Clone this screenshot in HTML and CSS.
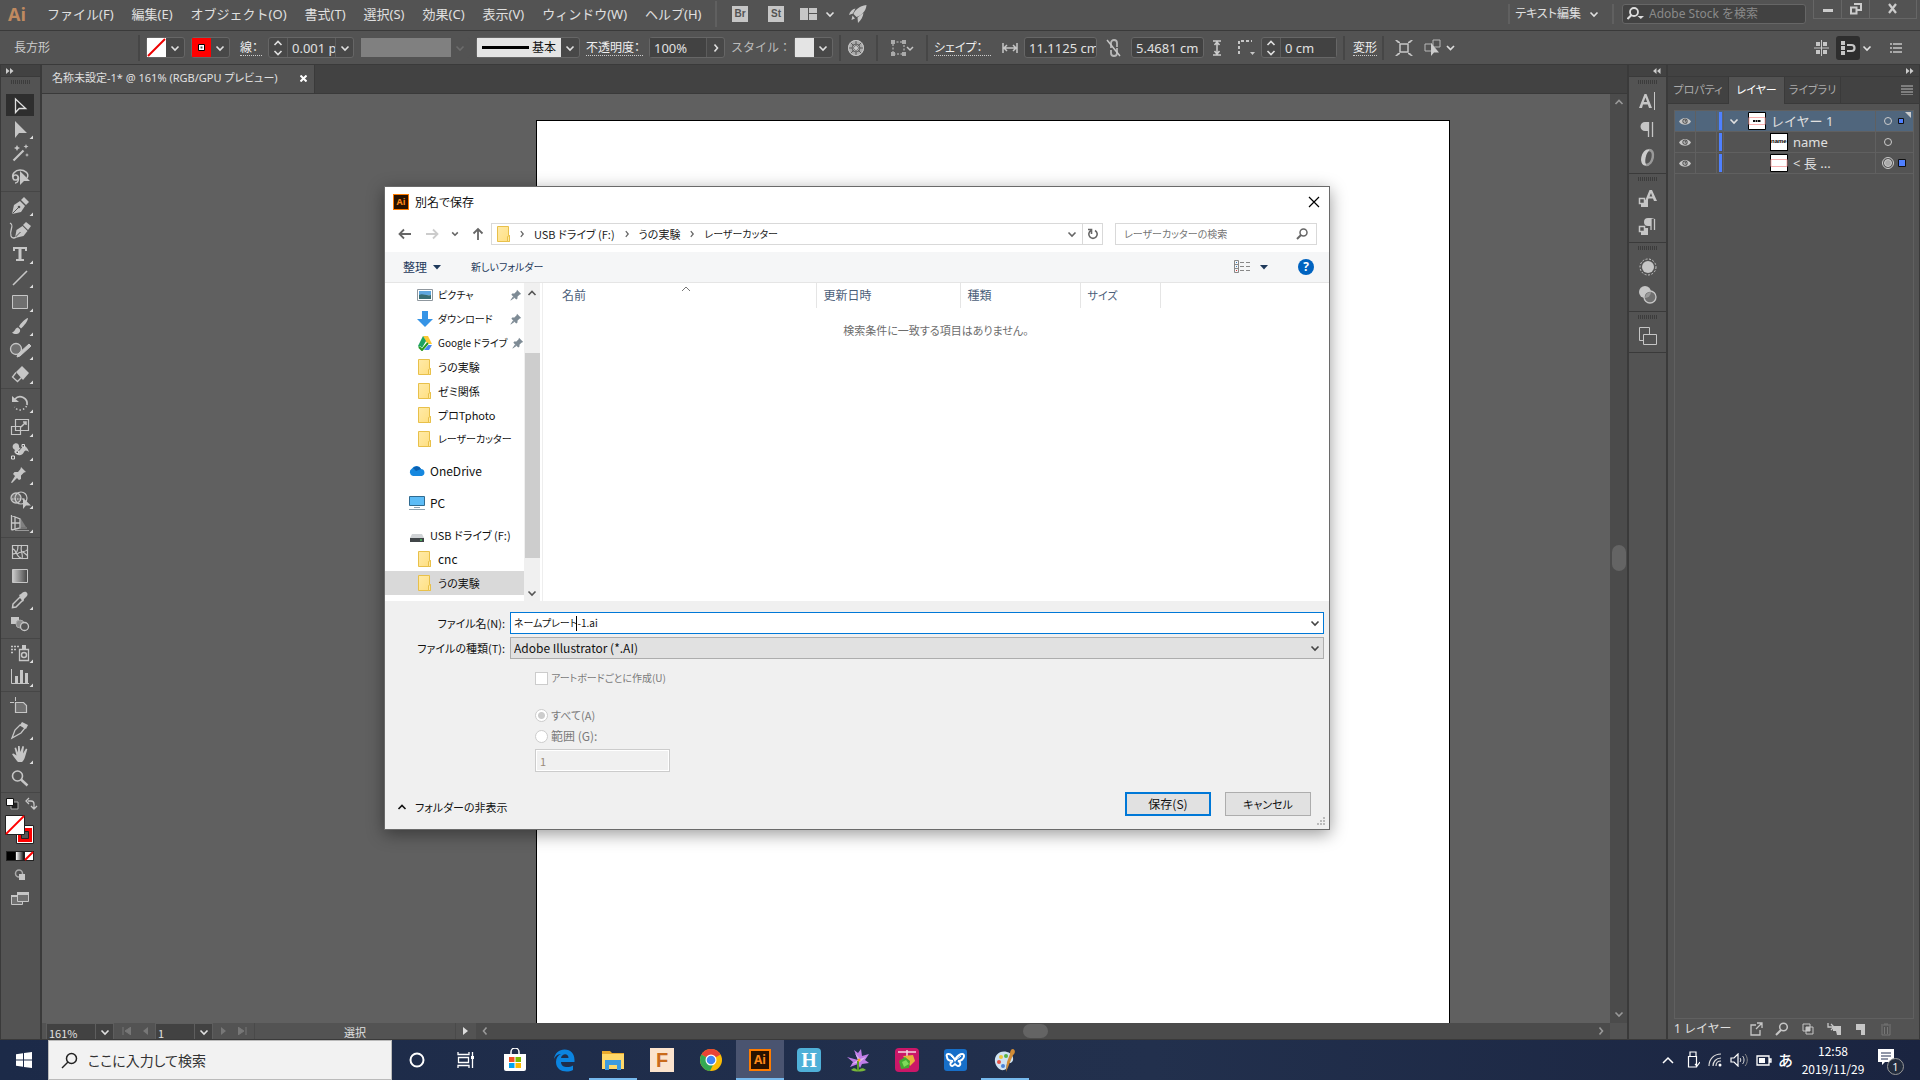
FILE: index.html
```html
<!DOCTYPE html>
<html lang="ja">
<head>
<meta charset="utf-8">
<title>名称未設定-1</title>
<link rel="stylesheet" href="styles.css">
</head>
<body>
<svg class="defs" aria-hidden="true">
  <defs>
    <linearGradient id="fade"><stop offset="0" stop-color="#ccc"/><stop offset="1" stop-color="#444"/></linearGradient>
    <linearGradient id="bw"><stop offset="0" stop-color="#fff"/><stop offset="1" stop-color="#111"/></linearGradient>
    <linearGradient id="gold" x2="1" y2="1"><stop offset="0" stop-color="#ffeaa8"/><stop offset="1" stop-color="#ffdf80"/></linearGradient>
    <symbol id="down" viewBox="0 0 10 10"><path d="M1.500 3.500 5 7l3.500-3.500" fill="none" stroke="currentColor" stroke-width="1.600"/></symbol>
    <symbol id="up" viewBox="0 0 10 10"><path d="M1.500 7 5 3.500 8.500 7" fill="none" stroke="currentColor" stroke-width="1.600"/></symbol>
    <symbol id="right" viewBox="0 0 10 10"><path d="M3.500 1.500 6.500 5l-3 3.500" fill="none" stroke="currentColor" stroke-width="1.600"/></symbol>
    <symbol id="left" viewBox="0 0 10 10"><path d="M6.500 1.500 3.500 5l3 3.500" fill="none" stroke="currentColor" stroke-width="1.600"/></symbol>
    <symbol id="spin" viewBox="0 0 10 18"><path d="M1.500 6 5 2.500 8.500 6M1.500 12 5 15.500 8.500 12" fill="none" stroke="currentColor" stroke-width="1.600"/></symbol>
    <symbol id="dbl-right" viewBox="0 0 8 6"><path d="M0 0 3.500 3 0 6zM4 0l3.500 3L4 6z" fill="currentColor"/></symbol>
    <symbol id="dbl-left" viewBox="0 0 8 6"><path d="M3.500 0 0 3l3.500 3zM7.500 0 4 3l3.500 3z" fill="currentColor"/></symbol>
    <symbol id="more" viewBox="0 0 36 24"><path d="M31 18.500V22h-3.500z" fill="currentColor"/></symbol>
    <symbol id="folder" viewBox="0 0 16 16"><path d="M1.500.5h11v9h1v6h-12z" fill="url(#gold)" stroke="#e8c04a"/><path d="M11.500 15.500v-5l2-1v6z" fill="#ffe9a0" stroke="#e8c04a"/></symbol>
    <symbol id="pin" viewBox="0 0 12 12"><path d="M7 .8 11.200 5l-1.400.4-2.200 2.200-.2 2.200-1.200.8L1.400 5.800l.8-1.200 2.200-.2 2.200-2.200zM3 7.600 4.400 9 .8 11.600l-.4-.4z" fill="#7e8b95"/></symbol>
    <symbol id="eye" viewBox="0 0 14 10"><path d="M0 5C3-.6 11-.6 14 5 11 10 3 10 0 5z" fill="#c6c6c6"/><circle cx="7" cy="4.600" r="2.500" fill="none" stroke="#505050" stroke-width="1.200"/><circle cx="7.400" cy="4.200" r="1" fill="#505050"/></symbol>
  </defs>
</svg>

<div class="app">
  <header class="menubar">
    <span class="brand">Ai</span>
    <nav class="menus">
      <button>ファイル(F)</button><button>編集(E)</button><button>オブジェクト(O)</button><button>書式(T)</button><button>選択(S)</button><button>効果(C)</button><button>表示(V)</button><button>ウィンドウ(W)</button><button>ヘルプ(H)</button>
    </nav>
    <div class="quick">
      <button class="chip">Br</button>
      <button class="chip">St</button>
      <button class="arrange" aria-label="ドキュメントの配置"><svg width="17" height="12"><path d="M0 0h8v12H0zM9 0h8v5H9zM9 6h8v6H9z" fill="#c6c6c6"/></svg><svg width="10" height="10"><use href="#down"/></svg></button>
      <button aria-label="GPU"><svg width="18" height="18" viewBox="0 0 18 18"><path d="M17.500 0C10 1 6 5 4.500 9l3 3C13 10 17 6 17.500 0zM6.500 3.500C3 4 1 6.500 0 10l4-1.500zM14.500 8C14 12 12 15 9 18l-.5-5.500zM3.500 10.500l2.500 3-3.500 1.500z" fill="#c6c6c6"/></svg></button>
    </div>
    <div class="menu-right">
      <button class="workspace">テキスト編集 <svg width="10" height="10"><use href="#down"/></svg></button>
      <label class="stock"><svg width="18" height="16" viewBox="0 0 18 16"><circle cx="7" cy="6" r="4" fill="none" stroke="#ddd" stroke-width="1.800"/><path d="m4.500 9-4 4" stroke="#ddd" stroke-width="2"/><path d="M10.500 10h6.500l-3.200 3z" fill="#ddd"/></svg><input type="text" placeholder="Adobe Stock を検索" aria-label="Adobe Stock を検索"></label>
      <div class="winbtns">
        <button aria-label="最小化"><svg width="12" height="12"><path d="M1 6h10v3H1z" fill="#ccc"/></svg></button>
        <button aria-label="元に戻す"><svg width="12" height="12"><path d="M4 1h7v6H7M1 4.500h5.500v6H1z" fill="none" stroke="#ccc" stroke-width="2"/></svg></button>
        <button class="wide" aria-label="閉じる"><svg width="12" height="12"><path d="m2 1 7 9M9 1 2 10" stroke="#ccc" stroke-width="2.200"/></svg></button>
      </div>
    </div>
  </header>

  <div class="control">
    <div class="kind">長方形</div>
    <div class="combo"><svg width="19" height="19"><path d="M0 0h19v19H0z" fill="#fff"/><path d="m1 18 17-17" stroke="#e00" stroke-width="2"/></svg><button aria-label="塗り"><svg width="10" height="10"><use href="#down"/></svg></button></div>
    <div class="combo"><svg width="19" height="19"><path d="M0 0h19v19H0z" fill="red"/><path d="M6.500 6.500h6v6h-6z" fill="#fff" stroke="#000"/><path d="M8 8h3v3H8z" fill="#fff" stroke="#fff"/><path d="M8.500 8.500h2v2h-2z" fill="#555"/></svg><button aria-label="線の色"><svg width="10" height="10"><use href="#down"/></svg></button></div>
    <label class="link strokew" for="sw">線：</label>
    <div class="combo"><button aria-label="増減"><svg width="10" height="18"><use href="#spin"/></svg></button><input id="sw" class="w48" value="0.001 pt"><button aria-label="線幅"><svg width="10" height="10"><use href="#down"/></svg></button></div>
    <div class="combo off"><span class="profile"></span><button disabled aria-label="プロファイル"><svg width="10" height="10"><use href="#down"/></svg></button></div>
    <div class="combo"><span class="brush"><i></i>基本</span><button aria-label="ブラシ"><svg width="10" height="10"><use href="#down"/></svg></button></div>
    <label class="link wide-label" for="op">不透明度：</label>
    <div class="combo"><input id="op" class="w56" value="100%"><button aria-label="不透明度"><svg width="10" height="10"><use href="#right"/></svg></button></div>
    <span class="muted wide-label">スタイル：</span>
    <div class="combo"><span class="style"></span><button aria-label="スタイル"><svg width="10" height="10"><use href="#down"/></svg></button></div>
    <button class="cell" aria-label="オブジェクトを再配色"><svg width="18" height="18" viewBox="0 0 18 18"><circle cx="9" cy="9" r="8" fill="#aaa"/><path d="M9 1v16M1 9h16M3.500 3.500l11 11M14.500 3.500l-11 11" stroke="#5a5a5a"/><circle cx="9" cy="9" r="4" fill="none" stroke="#666"/><circle cx="9" cy="9" r="7.500" fill="none" stroke="#c8c8c8"/><circle cx="9" cy="9" r="2" fill="#c8c8c8"/></svg></button>
    <button class="cell" aria-label="整列"><svg width="24" height="18" viewBox="0 0 24 18"><path d="M3 3h11v12H3z" fill="none" stroke="#c6c6c6" stroke-dasharray="2 1.500"/><path d="M1 1h4v4H1zM12 1h4v4h-4zM1 13h4v4H1zM12 13h4v4h-4z" fill="#aaa"/><path d="m17 8 3 3 3-3" fill="none" stroke="#c6c6c6" stroke-width="1.500"/></svg></button>
    <label class="link wide-label shape" for="w">シェイプ：</label>
    <svg width="16" height="12" viewBox="0 0 16 12"><path d="M1 1v10M15 1v10M2 6h12M5 3 2 6l3 3M11 3l3 3-3 3" fill="none" stroke="#c6c6c6" stroke-width="1.500"/></svg>
    <input id="w" class="box" value="11.1125 cm">
    <svg width="16" height="18" viewBox="0 0 16 18"><path d="M5 9V4a3 3 0 0 1 6 0v4M11 9v5a3 3 0 0 1-6 0v-3" fill="none" stroke="#b6b6b6" stroke-width="1.800"/><path d="m1 1 13 16" stroke="#c6c6c6" stroke-width="1.500"/></svg>
    <input class="box" aria-label="高さ" value="5.4681 cm">
    <svg width="8" height="16" viewBox="0 0 8 16"><path d="M0 1h8M0 15h8M4 2v12M1.500 5 4 2l2.500 3M1.500 11 4 14l2.500-3" fill="none" stroke="#ccc" stroke-width="1.500"/></svg>
    <svg class="corners" width="17" height="16" viewBox="0 0 17 16"><path d="M1 14V1h13" fill="none" stroke="#c6c6c6" stroke-width="2" stroke-dasharray="3 2"/><path d="M12 12h5l-2.500 3z" fill="#c6c6c6"/></svg>
    <div class="combo"><button aria-label="角丸の増減"><svg width="10" height="18"><use href="#spin"/></svg></button><input class="w56" aria-label="角丸の半径" value="0 cm"></div>
    <div class="transform"><a class="link" href="#">変形</a></div>
    <button class="plain" aria-label="選択オブジェクト編集モード"><svg width="18" height="16" viewBox="0 0 18 16"><path d="M5 4h8v8H5z" fill="none" stroke="#c6c6c6" stroke-width="1.500"/><path d="M0 0h2l3 2v1H3zM18 0h-2l-3 2v1h2zM0 16h2l3-2v-1H3zM18 16h-2l-3-2v-1h2z" fill="#c6c6c6"/></svg></button>
    <button class="plain" aria-label="同じ属性を選択"><svg width="32" height="18" viewBox="0 0 32 18"><path d="M9 1h7v7H9zM1 5h7v7H1z" fill="none" stroke="#b8b8b8"/><path d="M7 4v13l3-3.500h5z" fill="#ccc"/><path d="m23 7 3.500 3.500L30 7" fill="none" stroke="#ddd" stroke-width="1.700"/></svg></button>
    <div class="control-end">
      <svg width="15" height="16"><path d="M7.500 0v16M0 8h15" stroke="#c6c6c6"/><path d="M2 2h4v4H2zM9 2h4v4H9zM2 10h4v4H2zM9 10h4v4H9z" fill="#c6c6c6"/></svg>
      <button class="snap" aria-label="スナップ"><svg width="15" height="16"><path d="M0 1h4v4H0zM0 6h4v4H0zM0 11h4v4H0z" fill="#c6c6c6"/><path d="M6 5h4.500a3 3 0 0 1 0 6H6" fill="none" stroke="#c6c6c6" stroke-width="2.200"/></svg></button>
      <svg width="10" height="10"><use href="#down"/></svg>
      <svg class="list" width="12" height="10"><path d="M0 1h2M3 1h9M0 5h2M3 5h9M0 9h2M3 9h9" stroke="#c6c6c6" stroke-width="1.500"/></svg>
    </div>
  </div>

  <main class="work">
    <aside class="tools">
      <div class="dock-head"><svg width="8" height="6"><use href="#dbl-right"/></svg></div>
      <div class="grip"></div>
      <div class="toolset">
        <button class="on" aria-label="選択"><svg><path d="M13.500 6v13.500l3.700-4h6.500z" fill="none" stroke="#e0e0e0" stroke-width="1.300"/></svg></button>
        <button aria-label="ダイレクト選択"><svg><path d="M13 4v17l4-5h8z" fill="#c6c6c6"/><use href="#more"/></svg></button>
        <button aria-label="自動選択"><svg><path d="m11.500 19.500 10-10" stroke="#c6c6c6" stroke-width="2.200"/><path d="m15 4 1 2 2 1-2 1-1 2-1-2-2-1 2-1zM24 3l.7 1.700 1.800.8-1.800.8L24 8l-.7-1.700-1.800-.8 1.800-.8zM25 12l.6 1.400 1.400.6-1.400.6L25 16l-.6-1.400L23 14l1.400-.6z" fill="#c6c6c6"/></svg></button>
        <button aria-label="なげなわ"><svg><path d="M12 15C8 9 14 5 18 5s10 3 7 8M14 10a2.500 2.500 0 1 1-1 5 2.500 2.500 0 0 1 1-5c4 0 3 8-1 8" fill="none" stroke="#c6c6c6" stroke-width="1.500"/><path d="M18 6v14l4-4h6z" fill="#c6c6c6"/></svg></button>
      </div>
      <div class="toolset">
        <button aria-label="ペン"><svg><path d="M10 20l2-9 6-4 5 5-4 6z" fill="#c6c6c6"/><path d="m19 6 3-3 5 5-3 3z" fill="#c6c6c6"/><path d="m10.500 19.500 6-6" stroke="#535353"/><circle cx="17" cy="13" r="1.300" fill="#535353"/><use href="#more"/></svg></button>
        <button aria-label="曲線"><svg><path d="M13 20l1.500-8 6-4 5 5-4 5z" fill="#c6c6c6"/><path d="m21 7 3-3 5 4-3 4z" fill="#c6c6c6"/><path d="m13.500 19 5-5" stroke="#535353"/><path d="M8 5c5 3-1 6 1 13 1 3 4 2 5 1" fill="none" stroke="#c6c6c6" stroke-width="1.300"/></svg></button>
        <button aria-label="文字"><svg><path d="M11 5h14v4h-2V7h-3.500v10H22v2h-8v-2h2.500V7H13v2h-2z" fill="#c6c6c6"/><use href="#more"/></svg></button>
        <button aria-label="直線"><svg><path d="m11 19 14-14" stroke="#c6c6c6" stroke-width="1.600"/><use href="#more"/></svg></button>
        <button aria-label="長方形"><svg><path d="M10.500 5.500h15v13h-15z" fill="#707070" stroke="#c6c6c6"/><use href="#more"/></svg></button>
        <button aria-label="ブラシ"><svg><path d="M26 4c-2 0-8 6-9 8.500l2 2C22 12 26 7 26 4zM16 13.500c-3 0-2.500 4-6 5 3 3 9 1.500 8-3z" fill="#c6c6c6"/><use href="#more"/></svg></button>
        <button aria-label="Shaper"><svg><circle cx="14" cy="11" r="5.500" fill="#707070" stroke="#c6c6c6" stroke-width="1.300"/><path d="M15 19l1-3L27 6l2 2-11 10z" fill="#c6c6c6" stroke="#c6c6c6"/><use href="#more"/></svg></button>
        <button aria-label="消しゴム"><svg><path d="m14 10 6-6 7 7-6 7z" fill="#c6c6c6"/><path d="m14 10.500-3.500 4.500 5 4.500 4-4" fill="none" stroke="#c6c6c6" stroke-width="1.300"/><use href="#more"/></svg></button>
      </div>
      <div class="toolset">
        <button aria-label="回転"><svg><path d="M13 8a7 7 0 0 1 12 6" fill="none" stroke="#c6c6c6" stroke-width="1.800"/><path d="M10 5v6h7z" fill="#c6c6c6"/><path d="M24.500 15a7 7 0 0 1-12 1" fill="none" stroke="#c6c6c6" stroke-width="1.500" stroke-dasharray="1.500 2"/><use href="#more"/></svg></button>
        <button aria-label="拡大・縮小"><svg><path d="M13.500 4.500h13v11h-13zM9.500 11.500h9v8h-9z" fill="none" stroke="#c6c6c6" stroke-width="1.200"/><path d="m19 12 5-5M21 7h3v3" fill="none" stroke="#c6c6c6" stroke-width="1.500"/><use href="#more"/></svg></button>
        <button aria-label="線幅"><svg><path d="M11 6c2-3 6-2 6 1 0 2 1 3 3 1s5-1 7 5c-2-2-4-2-5 0-2 4-5 4-8 2-2-1-2-3-1-4-2-1-3-3-2-5z" fill="#c6c6c6"/><path d="m11 18 10-11" stroke="#535353"/><path d="M9.500 17h3v3h-3zM20 5.500h2.500V8H20zM14 12h2.500v2.500H14z" fill="#535353" stroke="#ddd"/><use href="#more"/></svg></button>
        <button aria-label="パペットワープ"><svg><path d="m19 4 5 5-2 .5-3 3 0 3.500-2 1-6-6 1.500-2 3.500 0 2.500-3zM13 13l2 2-5 5-1-.5z" fill="#c6c6c6"/><use href="#more"/></svg></button>
        <button aria-label="シェイプ形成"><svg><circle cx="14" cy="11" r="5" fill="#707070" stroke="#c6c6c6" stroke-width="1.300"/><circle cx="19" cy="11" r="6" fill="none" stroke="#c6c6c6" stroke-width="1.200"/><path d="M10 12h13" stroke="#ddd" stroke-dasharray="1.500 1"/><path d="M21 11v11l3-3.500h5z" fill="#c6c6c6"/><use href="#more"/></svg></button>
        <button aria-label="遠近グリッド"><svg><path d="M9.500 4v15M9.500 4.500 18 8v9l-8.500 2M9.500 12H18M13 6v12" fill="none" stroke="#c6c6c6" stroke-width="1.300"/><path d="M19 8l5 8h-5z" fill="#808080"/><path d="M13 19.500h14M17 17h8" stroke="#999"/><use href="#more"/></svg></button>
      </div>
      <div class="toolset">
        <button aria-label="メッシュ"><svg><path d="M10.500 5.500h15v13h-15zM10 14c5 0 6-3 6-9M10 9c4-1 4 8 9 9M20 5c-3 5 2 9 0 14M15 14c5-4 7 0 11-5M21 12l5 4" fill="none" stroke="#c6c6c6" stroke-width="1.200"/></svg></button>
        <button aria-label="グラデーション"><svg><path d="M10.500 5.500h15v13h-15z" fill="url(#fade)" stroke="#c6c6c6"/></svg></button>
        <button aria-label="スポイト"><svg><path d="m18 9 3 3-7 7-3.500.5.500-3.500z" fill="none" stroke="#c6c6c6" stroke-width="1.500"/><path d="M17 7l2-1c4-5 8-1 6 2l-3 3-1 3z" fill="#c6c6c6"/><use href="#more"/></svg></button>
        <button aria-label="ブレンド"><svg><path d="M9 5h8v7H9z" fill="#c6c6c6"/><circle cx="18" cy="12" r="4" fill="#8c8c8c" stroke="#aaa"/><circle cx="22.500" cy="14.500" r="4" fill="#535353" stroke="#c6c6c6" stroke-width="1.300"/></svg></button>
      </div>
      <div class="toolset">
        <button aria-label="シンボルスプレー"><svg><path d="M17.500 8.500h9v11h-9z" fill="none" stroke="#c6c6c6" stroke-width="1.300"/><path d="M20 4h4v4h-4z" fill="#c6c6c6"/><circle cx="22" cy="14" r="2.500" fill="none" stroke="#c6c6c6" stroke-width="1.500"/><path d="M9 5.500h8M9 8.500h6M9 11.500h3" stroke="#c6c6c6" stroke-width="1.500" stroke-dasharray="2 1"/><use href="#more"/></svg></button>
        <button aria-label="グラフ"><svg><path d="M9.500 4v14.500H27" fill="none" stroke="#c6c6c6"/><path d="M13 11h3v7h-3zM18 5h3v13h-3zM23 8h3v10h-3z" fill="#c6c6c6"/><use href="#more"/></svg></button>
      </div>
      <div class="toolset">
        <button aria-label="アートボード"><svg><path d="M13.500 8.500h8l3 3v7h-11z" fill="#707070" stroke="#c6c6c6" stroke-width="1.200"/><path d="M8 8.500h4M13.500 3v4" stroke="#c6c6c6"/></svg></button>
        <button aria-label="スライス"><svg><path d="m10 20 3-8 5-5 5 3-4 5z" fill="none" stroke="#c6c6c6" stroke-width="1.300"/><path d="m18 7 2-3 6 3-2 4z" fill="#c6c6c6"/><use href="#more"/></svg></button>
        <button aria-label="手のひら"><svg><path d="M15 19c-2-3-4-5-5-7l1.500-.5 3 2L12.500 6 14 5.500l2 5V4h1.700l.6 6L20.500 4l1.500.5-1 7 3-5 1.300.8L23 15c-1 3-2 4-3 5h-4z" fill="#c6c6c6"/><use href="#more"/></svg></button>
        <button aria-label="ズーム"><svg><circle cx="15.500" cy="10" r="5" fill="none" stroke="#c6c6c6" stroke-width="1.600"/><path d="m19 13.500 6.500 6" stroke="#c6c6c6" stroke-width="2.400"/></svg></button>
      </div>
      <div class="swatches">
        <svg width="36" height="68" viewBox="0 0 36 68"><path d="M9 7h7v7H9z" fill="#222" stroke="#aaa"/><path d="M4.500 3.500h7v7h-7z" fill="#fff" stroke="#111"/><path d="M26 6h3a3 3 0 0 1 3 3v4M27 3l-3 3 3 3M29 11l3 3 3-3" fill="none" stroke="#c6c6c6" stroke-width="1.300"/>
          <path d="M14.500 30.500h17v18h-17z" fill="#fff" stroke="#222"/><path d="M18 35h10v10H18z" fill="#555" stroke="red" stroke-width="4"/><path d="M19.500 36.500h7v7h-7z" fill="#555" stroke="#222"/>
          <path d="M3.500 20.500h19v19h-19z" fill="#fff" stroke="#222"/><path d="m4 39 18-18" stroke="red" stroke-width="1.800"/>
          <path d="M4 56h28v10H4z" fill="#222"/><path d="M5 57h8v8H5z" fill="#000"/><path d="M14 57h8v8h-8z" fill="url(#bw)"/><path d="M23 57h8v8h-8z" fill="#fff"/><path d="m23 65 8-8" stroke="red" stroke-width="2"/></svg>
      </div>
      <button class="mode" aria-label="描画方法"><svg><circle cx="17" cy="10.500" r="3.500" fill="none" stroke="#aaa" stroke-width="1.500"/><path d="M17 11h6v6h-6z" fill="#c6c6c6"/></svg></button>
      <button class="mode" aria-label="スクリーンモード"><svg><path d="M9.500 8.500h11v9h-11z" fill="#707070" stroke="#c6c6c6"/><path d="M15.500 5.500h11v9h-11z" fill="#707070" stroke="#c6c6c6"/><path d="M15 5h12v3H15zM9 8h6v2H9z" fill="#c6c6c6"/></svg></button>
    </aside>

    <section class="document">
      <div class="tabs"><div class="tab">名称未設定-1* @ 161% (RGB/GPU プレビュー) <button aria-label="閉じる"><svg width="7" height="7"><path d="m.5.5 6 6M6.500.5l-6 6" stroke="#fff" stroke-width="2"/></svg></button></div></div>
      <div class="stage">
        <div class="canvas"><div class="artboard"></div></div>
        <div class="vscroll"><svg width="10" height="10"><use href="#up"/></svg><i></i><svg width="10" height="10"><use href="#down"/></svg></div>
      </div>
      <div class="status">
        <div class="zoom"><input aria-label="ズーム" value="161%"><button aria-label="ズーム選択"><svg width="10" height="10"><use href="#down"/></svg></button></div>
        <div class="nav"><svg width="9" height="8"><path d="M1 0v8M9 0 3 4l6 4z" fill="#777" stroke="#777"/></svg><svg width="6" height="8"><path d="M6 0 1 4l5 4z" fill="#777"/></svg></div>
        <div class="zoom page"><input aria-label="アートボード" value="1"><button aria-label="アートボード選択"><svg width="10" height="10"><use href="#down"/></svg></button></div>
        <div class="nav"><svg width="6" height="8"><path d="m0 0 5 4-5 4z" fill="#777"/></svg><svg width="9" height="8"><path d="M8 0v8M0 0l6 4-6 4z" fill="#777" stroke="#777"/></svg></div>
        <div class="current">選択</div>
        <svg class="play" width="6" height="8"><path d="m0 0 5 4-5 4z" fill="#ddd"/></svg>
        <div class="hscroll"><svg width="10" height="10"><use href="#left"/></svg><i></i><svg width="10" height="10"><use href="#right"/></svg></div>
        <div class="corner"></div>
      </div>
    </section>

    <aside class="dock">
      <div class="dock-head"><svg width="8" height="6"><use href="#dbl-left"/></svg></div>
      <div class="dock-group"><div class="grip"></div>
        <button aria-label="文字"><svg width="22" height="22"><path d="M2 18 7.500 4h2L15 18h-3l-1.200-3.500H6L5 18zM6.800 12h3.300L8.500 7.500z" fill="#c6c6c6"/><path d="M17.500 2v18" stroke="#c6c6c6"/></svg></button>
        <button aria-label="段落"><svg width="22" height="22"><path d="M11.500 4v15M15.500 4v15" stroke="#c6c6c6" stroke-width="1.300"/><path d="M16 4H8a4 4 0 0 0 0 9h4V4z" fill="#c6c6c6"/></svg></button>
        <button aria-label="OpenType"><svg width="22" height="22"><path d="M12 4C5 3 1.500 19 9 19c-3-2-1-13 3-15z" fill="#ccc" stroke="#ccc" stroke-width="1.500"/><path d="M12 4c7 0 4 15-3 15" fill="none" stroke="#999" stroke-width="2.500"/></svg></button>
      </div>
      <div class="dock-group"><div class="grip"></div>
        <button aria-label="文字スタイル"><svg width="22" height="22"><path d="m8 14 4.500-11h2.500l5 11h-3l-1-2.500h-4.500L10.500 14zM12.500 9.500h2.800L14 6z" fill="#c6c6c6"/><path d="M4 13h7v7H4z" fill="#c6c6c6"/><path d="M2.500 11.500h5v5h-5z" fill="#535353" stroke="#c6c6c6" stroke-width="1.500"/></svg></button>
        <button aria-label="段落スタイル"><svg width="22" height="22"><path d="M14 4v11M17.500 4v11" stroke="#c6c6c6" stroke-width="1.300"/><path d="M18 3h-7a4 4 0 0 0 0 8h3V4z" fill="#c6c6c6"/><path d="M4 13h7v7H4z" fill="#c6c6c6"/><path d="M2.500 11.500h5v5h-5z" fill="#535353" stroke="#c6c6c6" stroke-width="1.500"/></svg></button>
      </div>
      <div class="dock-group"><div class="grip"></div>
        <button aria-label="アピアランス"><svg width="22" height="22"><circle cx="11" cy="11" r="6" fill="#c6c6c6"/><circle cx="11" cy="11" r="8" fill="none" stroke="#c6c6c6" stroke-dasharray="2 1.500"/></svg></button>
        <button aria-label="グラフィックスタイル"><svg width="22" height="22"><circle cx="8" cy="8" r="6" fill="#c6c6c6"/><circle cx="13" cy="13" r="6" fill="#707070" stroke="#c6c6c6" stroke-width="1.300"/><path d="M8 14a6 6 0 0 1 6-6 6 6 0 0 1-6 6z" fill="#999"/></svg></button>
      </div>
      <div class="dock-group"><div class="grip"></div>
        <button aria-label="アセット"><svg width="22" height="22"><path d="M2.500 2.500h10v13h-10z" fill="none" stroke="#c6c6c6"/><path d="M6.500 9.500h13v10h-13z" fill="#535353" stroke="#c6c6c6"/></svg></button>
      </div>
    </aside>

    <aside class="panel">
      <div class="dock-head end"><svg width="8" height="6"><use href="#dbl-right"/></svg></div>
      <div class="panel-tabs"><button>プロパティ</button><button class="on">レイヤー</button><button>ライブラリ</button><svg width="12" height="10"><path d="M0 1h12M0 4h12M0 7h12M0 10h12" stroke="#bbb"/></svg></div>
      <ul class="layers">
        <li class="sel"><span><svg width="12" height="9"><use href="#eye"/></svg></span><span></span><b></b><div><svg width="10" height="10"><use href="#down"/></svg><svg width="18" height="18"><path d="M.5.5h17v17H.5z" fill="#fff" stroke="#000"/><path d="M1 5.500h16v7H1z" fill="none" stroke="#f8b0b0"/><path d="M5 9h8" stroke="#111" stroke-width="2" stroke-dasharray="2 .5"/></svg>レイヤー 1</div><span class="target"><svg width="34" height="18"><circle cx="11" cy="9" r="3.500" fill="none" stroke="#ccc"/><path d="M21.500 6.500h5v5h-5z" fill="#4f80ff" stroke="#111"/><path d="M28 0h6v6z" fill="#ccc"/></svg></span></li>
        <li><span><svg width="12" height="9"><use href="#eye"/></svg></span><span></span><b></b><div class="sub"><i class="thumb">name</i>name</div><span class="target"><svg width="34" height="18"><circle cx="11" cy="9" r="3.500" fill="none" stroke="#ccc"/></svg></span></li>
        <li><span><svg width="12" height="9"><use href="#eye"/></svg></span><span></span><b></b><div class="sub"><svg width="18" height="18"><path d="M.5.5h17v17H.5z" fill="#fff" stroke="#000"/><path d="M1 5.500h16v7H1z" fill="none" stroke="#f8b0b0"/></svg>&lt; 長 ...</div><span class="target"><svg width="34" height="18"><circle cx="11" cy="9" r="3.500" fill="#aaa" stroke="#ccc"/><circle cx="11" cy="9" r="5.500" fill="none" stroke="#ccc"/><path d="M21.500 5.500h7v7h-7z" fill="#4f80ff" stroke="#111"/></svg></span></li>
      </ul>
      <div class="panel-foot"><span>1 レイヤー</span>
        <svg width="14" height="14"><path d="M7 3H2v10h9V8M8 1h5v5M13 1 7 7" fill="none" stroke="#c6c6c6" stroke-width="1.300"/></svg>
        <svg width="14" height="14"><circle cx="8.500" cy="5" r="3.800" fill="none" stroke="#c6c6c6" stroke-width="1.500"/><path d="m6 8-5 5" stroke="#c6c6c6" stroke-width="2"/></svg>
        <svg width="14" height="14"><path d="M2 2h7v7H2zM5 5h7v7H5z" fill="none" stroke="#c6c6c6"/><path d="M5 5h4v4H5z" fill="#c6c6c6"/></svg>
        <svg width="14" height="14"><path d="M6 4h8v9h-4l-1-4H6z" fill="#c6c6c6"/><path d="M1 1v4h5M4 2l3 3-3 3" fill="none" stroke="#c6c6c6" stroke-width="1.300"/></svg>
        <svg width="14" height="14"><path d="M3 2h9v11H8V8H3z" fill="#c6c6c6"/></svg>
        <svg width="14" height="14"><path d="M2 3h10M5 2h4M3 4v9h8V4M5.500 5v7M8.500 5v7" fill="none" stroke="#777"/></svg>
      </div>
    </aside>
  </main>

  <footer class="taskbar">
    <button class="start" aria-label="スタート"><svg width="16" height="16"><path d="M0 2.300 7 1.300v6.200H0zM8 1.100 16 0v7.500H8zM0 8.500h7v6.200l-7-1zM8 8.500h8V16l-8-1.100z" fill="#fff"/></svg></button>
    <label class="tsearch"><svg width="17" height="17"><circle cx="10.500" cy="6.500" r="5" fill="none" stroke="#222" stroke-width="1.500"/><path d="m7 10-6 6" stroke="#222" stroke-width="1.500"/></svg><input type="text" placeholder="ここに入力して検索" aria-label="ここに入力して検索"></label>
    <nav class="apps">
      <button aria-label="Cortana"><svg><circle cx="12" cy="12" r="6.500" fill="none" stroke="#fff" stroke-width="2"/></svg></button>
      <button aria-label="タスクビュー"><svg><path d="M4 4v2.500h11V4M4 20v-2.500h11V20M4.500 9.500h10v5h-10zM18.500 4v16" fill="none" stroke="#fff" stroke-width="1.300"/><path d="M17 8h3v3h-3z" fill="#fff"/></svg></button>
      <button aria-label="ストア"><svg><path d="M8 6V4a4 4 0 0 1 8 0v2" fill="none" stroke="#fff" stroke-width="1.500"/><path d="M1 6h22v15a2 2 0 0 1-2 2H3a2 2 0 0 1-2-2z" fill="#fff"/><path d="M6 9h5.500v5H6z" fill="#f25022"/><path d="M12.500 9H18v5h-5.500z" fill="#7fba00"/><path d="M6 15h5.500v5H6z" fill="#00a4ef"/><path d="M12.500 15H18v5h-5.500z" fill="#ffb900"/></svg></button>
      <button aria-label="Edge"><svg><path d="M2 11C3 5 7 1.500 12.500 1.500 19 1.500 22.500 6 22.500 12v2H9c0 6 8 6 12 3.500V22c-7 3.500-17 1-17-8 0-4 2-6.500 5-8-4 0-6 3-7 5zm7-1h7.500c0-5-6.500-5-7.500 0z" fill="#0b84e0"/></svg></button>
      <button class="run" aria-label="エクスプローラー"><svg><path d="M1 3h8l2 2h12v4H1z" fill="#e9a92c"/><path d="M1 6h22v15H1z" fill="#ffd869"/><path d="M4 12h16v10h-4v-5H8v5H4z" fill="#3d9bdf"/></svg></button>
      <button aria-label="Fusion 360"><span class="logo fusion">F</span></button>
      <button aria-label="Chrome"><svg><circle cx="12" cy="12" r="11" fill="#fbbc05"/><path d="M12 12 2.500 6.500a11 11 0 0 1 19 0z" fill="#ea4335"/><path d="M2.500 6.500A11 11 0 0 0 11 23l4-8-3-3z" fill="#34a853"/><circle cx="12" cy="12" r="5.500" fill="#fff"/><circle cx="12" cy="12" r="4.300" fill="#4285f4"/></svg></button>
      <button class="active" aria-label="Illustrator"><span class="logo ai">Ai</span></button>
      <button aria-label="H"><span class="logo h">H</span></button>
      <button aria-label="花"><svg><path d="M12 12 8 2l4 3 3-4 1 7 7-2-4 6 4 3-7 1-2 4-2-4-8 3 3-5-6-5z" fill="#c07de8"/><path d="m12 12-3-7 5 6 6-2-6 5-8 2z" fill="#e2b5f5"/><path d="M11 13h2v10h-2z" fill="#5a9a28"/><path d="M5 22c3-3 5-2 7 1 2-3 5-4 8-1-4 2-11 2-15 0z" fill="#78b83a"/><circle cx="13" cy="12" r="1.500" fill="#f1a22a"/></svg></button>
      <button aria-label="レーザー"><svg><rect width="24" height="24" rx="4" fill="#cb1768"/><path d="M3 4h18M12 2v6" stroke="#f3d7df" stroke-width="1.500"/><path d="m8 8 10-1 2 6-5 5z" fill="#e9b23a"/><path d="m4 13 6-4 5 4-1 7-8 1z" fill="#44a832"/><path d="m7 14 4-2 3 4-5 3z" fill="#7edb5a"/></svg></button>
      <button aria-label="蝶"><svg><rect y="1" width="23" height="22" rx="3" fill="#176fc9"/><path d="M11 12C7 4 1 5 3 9c0 4 4 4 6 4-5 2-2 8 2 3 4 5 8-1 3-3 3 0 6-2 6-5 0-4-6-2-9 4z" fill="none" stroke="#fff" stroke-width="2"/><path d="M11 12 7 8M12 12l5-4" stroke="#fff"/></svg></button>
      <button class="run" aria-label="ペイント"><svg><path d="M2 14C1 7 7 2 14 4c5 1 8 7 5 10-2 2-4 0-5 2s1 5-3 6C7 23 3 19 2 14z" fill="#cfe3f4"/><circle cx="6" cy="14" r="2" fill="#e75145"/><circle cx="8" cy="9" r="2" fill="#efc53b"/><circle cx="13" cy="8" r="2" fill="#57b249"/><circle cx="10" cy="18" r="2" fill="#4984d8"/><path d="M20 1c3 1 2 5 0 6l-7 17 1-10 3-8c0-3 1-5 3-5z" fill="#d28c36"/></svg></button>
    </nav>
    <div class="tray">
      <svg class="expand" width="14" height="10"><path d="m2 8 5-5 5 5" fill="none" stroke="#fff" stroke-width="1.500"/></svg>
      <svg width="14" height="18"><path d="M4 5V1h6v4M2.500 5.500h8V16h-8zM9 13l2 2 3-4" fill="none" stroke="#fff" stroke-width="1.200"/></svg>
      <svg width="14" height="14"><path d="M1 13C1 6 6 1 13 1M5 13c0-4 3-8 8-8M8 13c0-3 2-5 5-5" fill="none" stroke="#ddd" stroke-width="1.200"/><circle cx="12" cy="12" r="1.500" fill="#fff"/></svg>
      <svg width="18" height="14"><path d="M1 5h3l4-4v12L4 9H1z" fill="none" stroke="#fff" stroke-width="1.200"/><path d="M10 5c1 1 1 3 0 4M12.500 3c2 2 2 6 0 8" fill="none" stroke="#ddd"/><path d="M15 1c3 3 3 9 0 12" fill="none" stroke="#888"/></svg>
      <svg width="16" height="11"><path d="M1 1h12v9H1zM13.500 4h1.500v3h-1.500z" fill="none" stroke="#fff" stroke-width="1.300"/><path d="M3 3h6v5H3z" fill="#fff"/></svg>
      <span class="ime">あ</span>
      <div class="clock"><span>12:58</span><span>2019/11/29</span></div>
      <button class="notice" aria-label="通知"><svg width="26" height="26"><path d="M2 2h16v13h-9l-3 3v-3H2z" fill="#fff"/><path d="M5 6h10M5 9h10M5 12h7" stroke="#222f50"/></svg><span>1</span></button>
    </div>
  </footer>

  <form class="dialog" onsubmit="return false">
    <div class="title"><span class="logo mini">Ai</span><h1>別名で保存</h1><button type="button" aria-label="閉じる"><svg width="12" height="12"><path d="m1 1 10 10M11 1 1 11" stroke="#000" stroke-width="1.200"/></svg></button></div>
    <div class="path">
      <div class="arrows">
        <svg width="14" height="12"><path d="M1.500 6H13M6 1.500 1.500 6 6 10.500" fill="none" stroke="#666" stroke-width="1.800"/></svg>
        <svg width="14" height="12"><path d="M1 6h11.500M8 1.500 12.500 6 8 10.500" fill="none" stroke="#ccc" stroke-width="1.800"/></svg>
        <svg width="8" height="8" viewBox="0 0 10 10"><path d="M1.500 3 5 6.500 8.500 3" fill="none" stroke="#666" stroke-width="2"/></svg>
        <svg width="12" height="14"><path d="M6 2v11M1.500 6.500 6 2l4.500 4.500" fill="none" stroke="#666" stroke-width="1.800"/></svg>
      </div>
      <div class="crumbs"><svg width="16" height="16"><use href="#folder"/></svg><svg width="8" height="8"><use href="#right"/></svg><a href="#">USB ドライブ (F:)</a><svg width="8" height="8"><use href="#right"/></svg><a href="#">うの実験</a><svg width="8" height="8"><use href="#right"/></svg><a href="#" class="kana">レーザーカッター</a><button type="button" class="hist" aria-label="履歴"><svg width="10" height="10"><use href="#down"/></svg></button><button type="button" class="reload" aria-label="更新"><svg width="12" height="12"><path d="M4 2.500a4.200 4.200 0 1 0 4 0M4.500 6V1.500H1" fill="none" stroke="#666" stroke-width="1.600"/></svg></button></div>
      <label class="find"><input class="kana" type="text" placeholder="レーザーカッターの検索" aria-label="レーザーカッターの検索"><svg width="12" height="12"><circle cx="7.500" cy="4.500" r="3.500" fill="none" stroke="#666" stroke-width="1.500"/><path d="m5 7-4 4" stroke="#666" stroke-width="2"/></svg></label>
    </div>
    <div class="bar"><button type="button" class="latin">整理 <svg width="8" height="5"><path d="M0 0h8L4 4.500z" fill="#1e395b"/></svg></button><button type="button" class="kana">新しいフォルダー</button>
      <div class="bar-end"><svg width="17" height="14"><path d="M.5.5h4v12h-4zM.5 4.500h4M.5 8.500h4" fill="none" stroke="#888"/><path d="M2 2h1v1H2zM2 6h1v1H2z" fill="#3b82c4"/><path d="M2 10h1v1H2z" fill="#d33"/><path d="M6 2.500h11M6 6.500h11M6 10.500h11" stroke="#888" stroke-dasharray="4 2"/></svg><svg width="8" height="5"><path d="M0 0h8L4 4.500z" fill="#1e395b"/></svg><button type="button" class="help">?</button></div>
    </div>
    <div class="browse">
      <nav class="tree">
        <a href="#" class="kana"><svg width="16" height="16"><path d="M.5 2.500h15v11H.5z" fill="#fff" stroke="#8f979e"/><path d="M2 4h12v4H2z" fill="#5fa6dd"/><path d="M2 8c4-2 6 1 12 0v4H2z" fill="#386d72"/></svg><span>ピクチャ</span><svg class="pin" width="12" height="12"><use href="#pin"/></svg></a>
        <a href="#" class="kana"><svg width="16" height="16"><path d="M5 0h6v8h5l-8 8-8-8h5z" fill="#3694e6"/></svg><span>ダウンロード</span><svg class="pin" width="12" height="12"><use href="#pin"/></svg></a>
        <a href="#" class="kana"><svg width="16" height="16"><path d="M6 1h5l4 8h-5z" fill="#fbc934"/><path d="M6 1 1 11l3 4 5-9z" fill="#1ea362"/><path d="M8 10h7l-3 5H5z" fill="#4688f1"/><path d="m2 12 3 3 6-7" fill="none" stroke="#fff" stroke-width="3"/><path d="m2 12 3 3 6-7" fill="none" stroke="#279a1f" stroke-width="2"/></svg><span>Google ドライブ</span><svg class="pin" width="12" height="12"><use href="#pin"/></svg></a>
        <a href="#"><svg width="16" height="16"><use href="#folder"/></svg><span>うの実験</span></a>
        <a href="#"><svg width="16" height="16"><use href="#folder"/></svg><span>ゼミ関係</span></a>
        <a href="#"><svg width="16" height="16"><use href="#folder"/></svg><span>プロTphoto</span></a>
        <a href="#" class="kana"><svg width="16" height="16"><use href="#folder"/></svg><span>レーザーカッター</span></a>
        <a href="#" class="root latin"><svg width="16" height="16"><path d="M4 13a4 4 0 0 1-1-7.500A5 5 0 0 1 12 6a3.600 3.600 0 0 1 1 7z" fill="#1688df"/><path d="M4 5a5 5 0 0 1 8 1L7 8z" fill="#0a5fb0"/></svg><span>OneDrive</span></a>
        <a href="#" class="root latin"><svg width="16" height="16"><path d="M.5 1.500h15v9H.5z" fill="#5dbcf6" stroke="#2f6b91"/><path d="M5 12.500h6M0 14.500h16" stroke="#8fa3b0"/></svg><span>PC</span></a>
        <a href="#" class="root"><svg width="16" height="16"><path d="M3 7h10l2 4H1z" fill="#d0d3d6"/><path d="M1 11h14v4H1z" fill="#414649"/><path d="M11 12.500h2v1h-2z" fill="#4dff64"/></svg><span>USB ドライブ (F:)</span></a>
        <a href="#" class="latin"><svg width="16" height="16"><use href="#folder"/></svg><span>cnc</span></a>
        <a href="#" class="cur"><svg width="16" height="16"><use href="#folder"/></svg><span>うの実験</span></a>
      </nav>
      <div class="treescroll"><svg width="10" height="10"><use href="#up"/></svg><i></i><svg width="10" height="10"><use href="#down"/></svg></div>
      <div class="files">
        <table>
          <thead><tr><th class="c-name">名前<svg width="10" height="6"><path d="m1 5 4-4 4 4" fill="none" stroke="#777"/></svg></th><th class="c-date">更新日時</th><th class="c-kind">種類</th><th class="c-size kana">サイズ</th><th></th></tr></thead>
        </table>
        <p>検索条件に一致する項目はありません。</p>
      </div>
    </div>
    <div class="fields">
      <label for="fn">ファイル名(N):</label>
      <div class="field name"><input id="fn" class="kana" type="text" value="ネームプレート-1.ai"><i class="caret"></i><svg width="10" height="10"><use href="#down"/></svg></div>
      <label for="ft">ファイルの種類(T):</label>
      <div class="field"><select id="ft" class="latin"><option>Adobe Illustrator (*.AI)</option></select><svg width="10" height="10"><use href="#down"/></svg></div>
      <div class="options">
        <label class="each kana"><input type="checkbox" disabled>アートボードごとに作成(U)</label>
        <label><input type="radio" name="r" checked disabled>すべて(A)</label>
        <label class="latin"><input type="radio" name="r" disabled>範囲 (G):</label>
        <input class="range" type="text" value="1" aria-label="範囲" disabled>
      </div>
    </div>
    <div class="actions">
      <button type="button" class="hide"><svg width="10" height="10"><use href="#up"/></svg>フォルダーの非表示</button>
      <button class="btn default">保存(S)</button><button type="button" class="btn">キャンセル</button>
    </div>
    <svg class="resize" width="9" height="9"><path d="M6 0h2v2H6zM6 3h2v2H6zM6 6h2v2H6zM3 3h2v2H3zM3 6h2v2H3zM0 6h2v2H0z" fill="#bbb"/></svg>
  </form>
</div>
</body>
</html>
```
FILE: styles.css
```css
* { box-sizing: border-box; }
body { margin: 0; font: 13px/18px "Noto Sans", "Noto Sans CJK JP", sans-serif; color: #e0e0e0; background: #535353; }
button, input, select { font: inherit; color: inherit; margin: 0; padding: 0; border: 0; background: none; border-radius: 0; outline: 0; }
button { display: flex; align-items: center; justify-content: center; white-space: nowrap; }
a { color: inherit; text-decoration: none; }
svg { display: block; flex: none; }
input { min-width: 0; }
.defs { position: absolute; width: 0; height: 0; }
.app { position: relative; display: flex; flex-direction: column; height: 100vh; overflow: hidden; }

/* menu bar */
.menubar { display: flex; align-items: center; height: 31px; padding-bottom: 3px; border-bottom: 1px solid #3a3a3a; flex: none; }
.brand { width: 47px; padding-left: 8px; font: bold 18px/24px "Open Sans", sans-serif; color: #c08a60; }
.menus { display: flex; gap: 18px; width: 670px; height: 26px; border-right: 2px solid #606060; }
.quick { display: flex; align-items: center; padding-left: 15px; }
.quick .chip { width: 16px; height: 16px; margin-right: 20px; background: #c6c6c6; color: #535353; font: bold 10px/16px "Liberation Sans", sans-serif; }
.arrange { gap: 8px; margin: 0 14px 0 -4px; }
.menu-right { display: flex; align-items: center; margin-left: auto; height: 28px; }
.workspace { justify-content: flex-end; gap: 8px; width: 106px; height: 20px; padding-right: 13px; border: solid #606060; border-width: 0 2px; font-size: 12px; font-feature-settings: "palt"; }
.stock { display: flex; align-items: center; gap: 4px; width: 184px; height: 20px; margin-left: 8px; padding-left: 4px; border: 1px solid #666; border-radius: 3px; background: #424242; font-size: 12px; }
.stock input { width: 150px; }
.stock input::placeholder { color: #8a8a8a; opacity: 1; }
.winbtns { display: flex; align-self: flex-start; height: 19px; margin: 0 3px 0 7px; border: solid #666; border-width: 0 1px 1px; }
.winbtns button { width: 28px; border-right: 1px solid #666; }
.winbtns .wide { width: 46px; border: 0; }

/* control bar */
.control { display: flex; align-items: center; height: 34px; padding-left: 14px; border-bottom: 1px solid #3a3a3a; flex: none; white-space: nowrap; gap: 6px; }
.kind { width: 126px; border-right: 2px solid #464646; color: #ccc; font-size: 12px; line-height: 26px; }
.combo { display: flex; height: 21px; border: 1px solid #666; border-radius: 3px; background: #484848; }
.combo button { width: 18px; }
.combo button + input { border-left: 1px solid #5c5c5c; }
.combo input { padding-left: 4px; }
.combo input + button { border-left: 1px solid #5c5c5c; }
.w48 { width: 48px; }
.w56 { width: 56px; background: #424242; }
.link { color: #f0f0f0; font-size: 12px; line-height: 15px; border-bottom: 1px dotted #ccc; font-feature-settings: "palt"; }
.strokew { width: 22px; margin-left: 4px; }
.wide-label { width: 57px; }
.shape { margin-right: 5px; }
.off { color: #6c6c6c; border-color: #535353; background: #535353; }
.profile { width: 90px; background: #808080; }
.brush { display: flex; align-items: center; justify-content: space-between; width: 84px; padding: 0 5px; background: #e4e4e4; color: #111; font-size: 12px; }
.brush i { width: 47px; height: 3px; background: #000; }
.muted { color: #bbb; font-size: 12px; }
.style { width: 19px; background: #e4e4e4; }
.cell { width: 31px; height: 26px; border-left: 2px solid #464646; }
.cell + .cell { width: 52px; border-right: 2px solid #464646; }
.box { width: 73px; height: 21px; padding-left: 4px; border: 1px solid #666; border-radius: 3px; background: #424242; }
.box + svg { margin: 0 3px; }
.corners { margin-left: 8px; }
.transform { display: flex; padding: 4px 5px 4px 8px; border: solid #464646; border-width: 0 2px; }
.plain { margin-left: 5px; }
.control-end { display: flex; align-items: center; margin-left: auto; padding-right: 18px; }
.snap { width: 24px; height: 24px; margin: 0 2px 0 7px; border-radius: 3px; background: #2e2e2e; }
.list { margin-left: 18px; }

/* work area */
.work { display: flex; flex: 1; min-height: 0; border-bottom: 1px solid #3a3a3a; }
.dock-head { display: flex; align-items: center; height: 12px; padding: 0 5px; background: #424242; border-bottom: 1px solid #3a3a3a; color: #ccc; }
.grip { width: 19px; height: 4px; margin: 3px auto; background: repeating-linear-gradient(90deg, #3c3c3c 0 1px, #535353 1px 2px); }
.tools { width: 42px; border: solid #3a3a3a; border-width: 0 2px 0 1px; flex: none; }
.tools .grip { margin-bottom: 9px; }
.toolset { padding: 0 2px 2px; border-bottom: 1px solid #464646; margin-bottom: 2px; }
.toolset button { width: 34px; height: 24px; }
.toolset svg, .mode svg { width: 36px; height: 24px; color: #ddd; }
.toolset .on { background: linear-gradient(#2e2e2e, #2e2e2e) center / 28px 22px no-repeat; }
.swatches { padding-left: 1px; }
.mode { width: 38px; height: 24px; }

.document { display: flex; flex-direction: column; flex: 1; min-width: 0; }
.tabs { display: flex; height: 29px; background: #424242; border-bottom: 1px solid #3a3a3a; flex: none; }
.tab { display: flex; align-items: center; justify-content: space-between; width: 273px; padding: 0 7px 2px 10px; background: #535353; border-right: 1px solid #3a3a3a; font: 11px/18px "Noto Sans", "Noto Sans CJK JP", sans-serif; font-feature-settings: "palt"; white-space: nowrap; }
.stage { display: flex; flex: 1; min-height: 0; }
.canvas { position: relative; flex: 1; overflow: hidden; background: #606060; }
.artboard { position: absolute; top: 26px; bottom: -1px; left: 494px; right: 160px; background: #fff; border: 1px solid #000; }
.vscroll { display: flex; flex-direction: column; align-items: center; justify-content: space-between; width: 17px; padding: 3px 0 4px; background: #4b4b4b; color: #999; }
.vscroll i { width: 14px; height: 26px; border-radius: 7px; background: #646464; }
.status { display: flex; align-items: center; height: 16px; padding-left: 4px; background: #535353; font: 11px/18px "Noto Sans CJK JP", sans-serif; overflow: hidden; flex: none; }
.zoom { display: flex; width: 68px; height: 16px; background: #424242; border: 1px solid #5e5e5e; border-bottom: 0; }
.zoom input { flex: 1; padding: 3px 0 0 2px; }
.zoom button { width: 18px; border-left: 1px solid #5e5e5e; }
.page { width: 58px; }
.nav { display: flex; justify-content: center; gap: 11px; width: 41px; }
.current { width: 202px; height: 16px; text-align: center; border: solid #4a4a4a; border-width: 0 1px; }
.play { margin: 0 7px; }
.hscroll { display: flex; align-items: center; justify-content: space-between; flex: 1; height: 16px; padding: 0 4px; background: #4b4b4b; color: #999; }
.hscroll i { width: 25px; height: 14px; margin-right: 16px; border-radius: 7px; background: #646464; }
.corner { width: 17px; height: 16px; background: #535353; }

.dock { width: 41px; border: solid #3a3a3a; border-width: 0 2px; flex: none; }
.dock .dock-head { justify-content: flex-end; }
.dock-group { padding-bottom: 2px; border-bottom: 1px solid #3a3a3a; overflow: hidden; }
.dock-group button { width: 100%; height: 28px; }

.panel { display: flex; flex-direction: column; width: 252px; border-right: 1px solid #3a3a3a; flex: none; }
.dock-head.end { justify-content: flex-end; flex: none; }
.panel-tabs { display: flex; align-items: center; height: 27px; background: #424242; border-bottom: 1px solid #3a3a3a; font-size: 11px; color: #aaa; font-feature-settings: "palt"; flex: none; }
.panel-tabs button { width: 56px; height: 27px; border-right: 1px solid #3a3a3a; }
.panel-tabs button:first-child { width: 61px; }
.panel-tabs .on { background: #535353; color: #fff; }
.panel-tabs svg { margin: 0 6px 0 auto; }
.layers { flex: 1; margin: 6px 5px 0 6px; padding: 0; list-style: none; border: 1px solid #606060; }
.layers li { display: grid; grid-template-columns: 21px 21px 6px 1fr 38px; height: 21px; border-bottom: 1px solid #606060; }
.layers .sel { background: #50667d; }
.layers li > span { display: flex; align-items: center; justify-content: center; border-right: 1px solid #606060; }
.layers li > .target { justify-content: flex-end; border: 0; border-left: 1px solid #606060; }
.layers .target svg { margin-right: 2px; }
.layers b { margin: 1px 1px 1px 2px; background: #4f80ff; }
.layers div { display: flex; align-items: center; gap: 5px; padding-left: 5px; font-size: 13px; border-left: 1px solid #606060; }
.layers div svg + svg { margin-left: 4px; }
.layers .sub { padding-left: 46px; }
.thumb { width: 18px; height: 18px; overflow: hidden; border: 1px solid #000; background: #fff; color: #000; font: bold 6px/14px "Liberation Sans", sans-serif; }
.panel-foot { display: flex; align-items: center; gap: 12px; height: 20px; padding-left: 6px; font-size: 12px; flex: none; }
.panel-foot span { width: 63px; }

/* taskbar */
.taskbar { display: flex; height: 40px; background: linear-gradient(90deg, #1c2a48, #22304d 60%, #1a2440); color: #fff; flex: none; }
.start { width: 48px; }
.tsearch { display: flex; align-items: center; gap: 10px; width: 344px; padding-left: 12px; background: #f2f2f2; border: 1px solid #bbb; color: #222; font: 14px/20px "Noto Sans CJK JP", sans-serif; font-feature-settings: "palt"; }
.tsearch input { flex: 1; }
.tsearch input::placeholder { color: #333; opacity: 1; }
.apps { display: flex; gap: 1px; padding-left: 1px; }
.apps button { width: 48px; height: 40px; border-bottom: 2px solid transparent; border-top: 2px solid transparent; }
.apps svg { width: 24px; height: 24px; }
.apps .run { border-bottom-color: #76b9ed; }
.apps .active { background: #4a5470; border-bottom-color: #76b9ed; border-top-color: #4a5470; }
.logo { display: block; width: 24px; height: 24px; text-align: center; font: bold 20px/24px "Liberation Sans", sans-serif; }
.fusion { background: #fbe3cd; color: #c96a1b; }
.ai { width: 22px; height: 22px; border: 2px solid #ff7c00; background: #2a1200; color: #ff8a1a; font: bold 12px/18px "Open Sans", sans-serif; }
.h { border-radius: 4px; background: #4fb0d8; color: #fff; font-family: "Liberation Serif", serif; }
.tray { display: flex; align-items: center; gap: 8px; margin-left: auto; padding-right: 15px; }
.expand { margin-right: 3px; }
.ime { margin-left: -2px; font: 500 15px/20px "Noto Sans CJK JP", sans-serif; }
.clock { display: flex; flex-direction: column; align-items: center; width: 64px; padding-bottom: 1px; font: 12px/18px "Noto Sans CJK JP", sans-serif; }
.notice { position: relative; width: 32px; }
.notice span { position: absolute; right: 1px; bottom: -2px; width: 17px; height: 17px; border-radius: 9px; border: 1px solid #999; background: #222c3d; font: 11px/15px "Open Sans", sans-serif; text-align: center; }

/* save dialog */
.dialog { position: absolute; left: 384px; top: 186px; width: 946px; border: 1px solid #6a6a6a; background: #fff; color: #111; box-shadow: 0 4px 16px rgba(0,0,0,.4); font: 11px/18px "Noto Sans CJK JP", sans-serif; font-feature-settings: "palt"; }
.kana { font-size: 10px; }
.latin { font-size: 12px; }
.title { display: flex; align-items: center; gap: 6px; height: 30px; padding: 0 9px 1px 8px; }
.title h1 { margin: 0; font: inherit; font-size: 12px; }
.title button { margin-left: auto; }
.mini { width: 16px; height: 16px; border: 1px solid #ff7c00; background: #2a1200; color: #ff8a1a; font: bold 9px/14px "Open Sans", sans-serif; }
.path { display: flex; align-items: center; height: 35px; padding: 0 12px 1px 0; }
.arrows { display: flex; align-items: center; justify-content: space-between; width: 106px; padding: 0 7px 0 13px; }
.crumbs { display: flex; align-items: center; flex: 1; height: 22px; padding-left: 4px; border: 1px solid #d9d9d9; color: #222; gap: 8px; }
.crumbs > svg { color: #666; }
.crumbs > svg:first-child { margin-right: -2px; }
.hist { margin-left: auto; width: 16px; color: #666; }
.reload { width: 20px; height: 20px; border-left: 1px solid #d9d9d9; margin-left: -6px; }
.find { display: flex; align-items: center; justify-content: space-between; width: 202px; height: 22px; margin-left: 12px; padding: 0 8px; border: 1px solid #d9d9d9; }
.find input { width: 160px; }
.find input::placeholder { color: #757575; opacity: 1; }
.bar { display: flex; align-items: center; gap: 30px; height: 31px; padding: 0 15px 0 18px; background: #f5f6f7; border-bottom: 1px solid #e5e5e5; color: #1e395b; }
.bar button { gap: 6px; }
.bar-end { display: flex; align-items: center; gap: 9px; margin-left: auto; }
.bar .help { width: 16px; height: 16px; margin-left: 21px; border-radius: 8px; background: #0063c0; color: #fff; font: bold 12px/16px "Open Sans", sans-serif; }
.browse { display: flex; height: 318px; }
.tree { width: 140px; }
.tree a { display: flex; align-items: center; gap: 5px; width: 139px; height: 24px; padding-left: 32px; white-space: nowrap; }
.tree .pin { margin: 0 2px 0 auto; }
.tree .root { padding-left: 24px; margin: 8px 0; }
.tree .root:has(+ a:not(.root)) { margin-bottom: 0; }
.tree .cur { background: #d9d9d9; }
.treescroll { display: flex; flex-direction: column; align-items: center; width: 16px; padding: 5px 0 3px; background: #f0f0f0; color: #555; }
.treescroll i { width: 15px; height: 205px; margin: 55px 0 auto; background: #cdcdcd; }
.files { flex: 1; margin-left: 2px; border-left: 1px solid #eee; }
.files table { width: 100%; table-layout: fixed; border-collapse: collapse; }
.files th { height: 25px; padding: 0 0 1px 7px; border-right: 1px solid #e5e5e5; text-align: left; font-size: 12px; font-weight: normal; color: #4c607a; }
.files th.kana { font-size: 11px; }
.files th:last-child { border: 0; }
.files .c-name { width: 273px; padding-left: 19px; }
.c-name svg { float: right; margin: 0 125px 0 0; }
.c-date { width: 144px; }
.c-kind { width: 120px; }
.c-size { width: 80px; }
.files p { width: 786px; margin: 13px 0; text-align: center; color: #6d6d6d; }
.fields { display: grid; grid-template-columns: 120px 1fr; gap: 3px 5px; padding: 11px 5px 0 0; background: #f0f0f0; }
.fields > label { text-align: right; line-height: 22px; white-space: nowrap; }
.field { position: relative; display: flex; align-items: center; height: 22px; padding: 0 3px; border: 1px solid #adadad; background: #e1e1e1; }
.field.name { border-color: #0078d7; background: #fff; }
.field input, .field select { flex: 1; appearance: none; color: #111; }
.field svg { color: #444; }
.caret { position: absolute; left: 65px; top: 3px; width: 1px; height: 15px; background: #000; }
.options { grid-column: 2; display: flex; flex-direction: column; align-items: flex-start; gap: 3px; padding: 7px 0 0 25px; color: #7a7a7a; }
.options label { display: flex; align-items: center; gap: 3px; height: 18px; }
.options .each { margin-bottom: 16px; }
.options label input { appearance: none; width: 13px; height: 13px; border: 1px solid #ccc; background: #fff; }
.options input[type=radio] { border-radius: 50%; }
.options label input:checked { background: radial-gradient(#ccc 0 3px, #fff 4px); }
.range { width: 135px; height: 23px; margin-top: 1px; padding-left: 4px; border: 1px solid #ccc; background: #f0f0f0; box-shadow: inset 0 0 0 1px #fff; color: #9a8a7a; }
.actions { display: flex; align-items: center; gap: 14px; height: 57px; padding: 7px 18px 0 12px; background: #f0f0f0; }
.hide { gap: 8px; margin: 6px auto 0 0; }
.btn { width: 86px; height: 24px; border: 1px solid #adadad; background: #e1e1e1; }
.default { border: 2px solid #0078d7; font-size: 12px; }
.resize { position: absolute; right: 3px; bottom: 3px; }
```
